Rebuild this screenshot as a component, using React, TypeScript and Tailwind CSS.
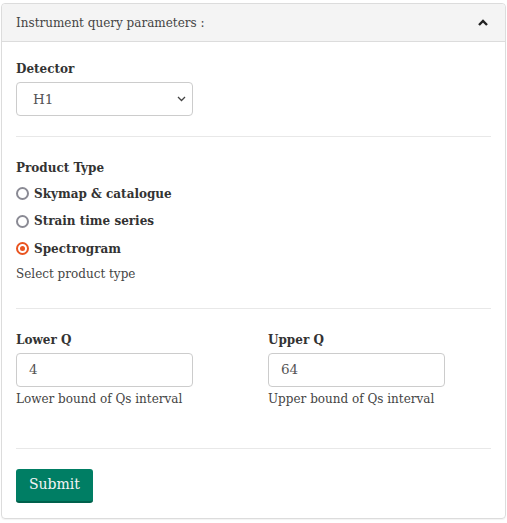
import React from "react";

const font = { fontFamily: '"DejaVu Serif", serif' };

function Radio({ checked, label }: { checked?: boolean; label: string }) {
  return (
    <label className="flex items-center gap-[5px] h-[27.5px]">
      <span
        className={
          checked
            ? "w-[13px] h-[13px] rounded-full border-2 border-[#e95420] flex items-center justify-center bg-white"
            : "w-[13px] h-[13px] rounded-full border-2 border-[#8a8a94] bg-white"
        }
      >
        {checked && <span className="w-[5px] h-[5px] rounded-full bg-[#e95420]" />}
      </span>
      <span className="font-bold text-[12px] text-[#333]">{label}</span>
    </label>
  );
}

export default function App() {
  return (
    <div className="w-[507px] h-[523px] bg-white pt-[3px] pl-[1px] pr-[1px]" style={font}>
      <div className="border border-[#dcdcdc] rounded-[4px] shadow-[0_1px_1px_rgba(0,0,0,0.05)]">
        <div className="h-[38px] bg-[#f4f4f4] border-b border-[#dcdcdc] flex items-center justify-between pl-[14px] pr-[17px] rounded-t-[4px]">
          <span className="text-[12px] text-[#444]">Instrument query parameters :</span>
          <svg width="10" height="7" viewBox="0 0 10 7">
            <path d="M1 6 L5 2 L9 6" stroke="#222" strokeWidth="2.4" fill="none" />
          </svg>
        </div>
        <div className="px-[14px] pt-[18px] pb-[15px]">
          <div className="font-bold text-[12px] text-[#333] leading-[19px]">Detector</div>
          <div className="mt-[3px] w-[177px] h-[34px] border border-[#ccc] rounded-[4px] flex items-center justify-between pl-[16px] pr-[6px]">
            <span className="text-[13.5px] text-[#555]">H1</span>
            <svg width="9" height="6" viewBox="0 0 9 6">
              <path d="M1 1 L4.5 4.5 L8 1" stroke="#444" strokeWidth="1.3" fill="none" />
            </svg>
          </div>
          <div className="mt-[20px] border-t border-[#e8e8e8]" />

          <div className="pt-[22px]">
            <div className="font-bold text-[12px] text-[#333] leading-[19px]">Product Type</div>
            <div className="mt-[2px] flex flex-col">
              <Radio label="Skymap & catalogue" />
              <Radio label="Strain time series" />
              <Radio checked label="Spectrogram" />
            </div>
            <div className="text-[12px] text-[#444] leading-[19px] mt-[2px]">Select product type</div>
          </div>
          <div className="mt-[24px] border-t border-[#e8e8e8]" />

          <div className="pt-[22px] grid grid-cols-[222px_1fr] gap-[30px]">
            <div>
              <div className="font-bold text-[12px] text-[#333] leading-[19px]">Lower Q</div>
              <div className="mt-[3px] w-[177px] h-[34px] border border-[#ccc] rounded-[4px] flex items-center pl-[12px]">
                <span className="text-[13.5px] text-[#555]">4</span>
              </div>
              <div className="text-[12px] text-[#444] leading-[19px] mt-[3px]">Lower bound of Qs interval</div>
            </div>
            <div>
              <div className="font-bold text-[12px] text-[#333] leading-[19px]">Upper Q</div>
              <div className="mt-[3px] w-[177px] h-[34px] border border-[#ccc] rounded-[4px] flex items-center pl-[12px]">
                <span className="text-[13.5px] text-[#555]">64</span>
              </div>
              <div className="text-[12px] text-[#444] leading-[19px] mt-[3px]">Upper bound of Qs interval</div>
            </div>
          </div>
          <div className="mt-[39px] border-t border-[#e8e8e8]" />

          <div className="pt-[20px]">
            <button className="w-[77px] h-[34px] bg-[#007e64] text-[#f4f4f4] text-[14px] rounded-[3px] border-b-2 border-[#00614c]">
              Submit
            </button>
          </div>
        </div>
      </div>
    </div>
  );
}
